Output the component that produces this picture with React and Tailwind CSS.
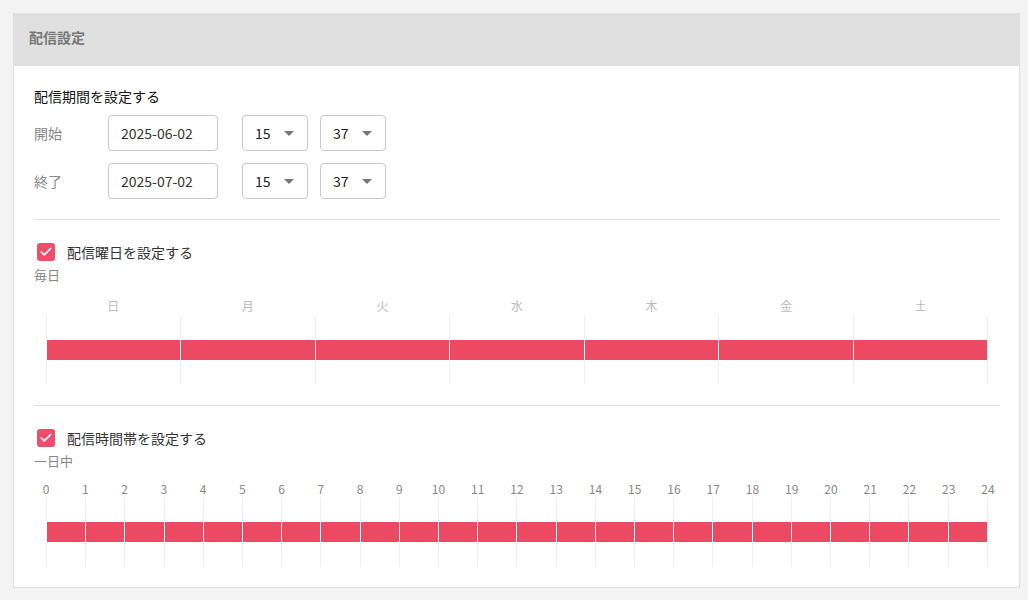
import { Check } from "lucide-react";

const days = ["日", "月", "火", "水", "木", "金", "土"];
const hours = Array.from({ length: 25 }, (_, i) => i);

const Arrow = () => (
  <svg width="10" height="5" viewBox="0 0 10 5" className="ml-auto">
    <path d="M0 0 L10 0 L5 5 Z" fill="#777" />
  </svg>
);

const Select = ({ value }) => (
  <div className="w-[66px] h-9 border border-[#c8c8c8] rounded flex items-center pl-3 pr-[13px] text-[14px] text-[#222]">
    <span>{value}</span>
    <Arrow />
  </div>
);

const DateRow = ({ label, date }) => (
  <div className="flex items-center">
    <span className="w-[74px] text-[14px] text-[#888]">{label}</span>
    <div className="w-[110px] h-9 border border-[#c8c8c8] rounded flex items-center px-3 text-[14px] text-[#333]">
      {date}
    </div>
    <div className="ml-6">
      <Select value="15" />
    </div>
    <div className="ml-3">
      <Select value="37" />
    </div>
  </div>
);

const CheckRow = ({ label }) => (
  <div className="flex items-center h-5">
    <div className="w-[18px] h-[18px] ml-[3px] rounded-[3px] bg-[#f04d6a] flex items-center justify-center">
      <Check size={14} strokeWidth={3} color="#fff" />
    </div>
    <span className="ml-3 text-[14px] text-[#333]">{label}</span>
  </div>
);

// one column of a chart: grid line on the left, bar in the middle
const Column = ({ last, bottom }) => (
  <div className={"flex-1 flex flex-col " + (last ? "border-r border-[#eee]" : "")}>
    <div className="h-[25px] border-l border-[#eee]" />
    <div className="h-5 bg-[#ec4962] border-l border-white" />
    <div className={bottom ? "h-[25px] border-l border-[#eee]" : "h-[24px] border-l border-[#eee]"} />
  </div>
);

export default function App() {
  return (
    <div
      className="min-h-[600px] bg-[#f3f3f3] pt-[13px] pl-[13px] pr-[8px] pb-[13px]"
      style={{ fontFamily: '"Noto Sans CJK JP", "Noto Sans", sans-serif' }}
    >
      <div className="bg-white border border-[#ddd] border-t-0">
        <div className="h-[53px] bg-[#e0e0e0] flex items-center px-[15px] pb-1 text-[14px] font-bold text-[#777]">
          配信設定
        </div>

        <div className="pl-5 pr-[19px] pt-5 pb-5">
          <div className="text-[14px] leading-5 text-[#111]">配信期間を設定する</div>
          <div className="mt-[9px] flex flex-col gap-3">
            <DateRow label="開始" date="2025-06-02" />
            <DateRow label="終了" date="2025-07-02" />
          </div>

          <div className="mt-5 border-t border-[#e0e0e0]" />

          <div className="mt-[22px]">
            <CheckRow label="配信曜日を設定する" />
          </div>
          <div className="mt-1 text-[13px] leading-[18px] text-[#888]">毎日</div>

          <div className="mx-3 mt-[13px]">
            <div className="flex h-[18px] items-center">
              {days.map((d) => (
                <div key={d} className="flex-1 text-center text-[12px] text-[#bbb]">
                  {d}
                </div>
              ))}
            </div>
            <div className="flex">
              {days.map((d, i) => (
                <Column key={d} last={i === days.length - 1} />
              ))}
            </div>
          </div>

          <div className="mt-[21px] border-t border-[#e0e0e0]" />

          <div className="mt-[22px]">
            <CheckRow label="配信時間帯を設定する" />
          </div>
          <div className="mt-1 text-[13px] leading-[18px] text-[#888]">一日中</div>

          <div className="mx-3 mt-[10px]">
            <div className="flex justify-between h-[17px] items-center -mx-[10px]">
              {hours.map((h) => (
                <div key={h} className="w-5 text-center text-[12px] text-[#888]">
                  {h}
                </div>
              ))}
            </div>
            <div className="flex">
              {hours.slice(0, 24).map((h) => (
                <Column key={h} last={h === 23} bottom />
              ))}
            </div>
          </div>
        </div>
      </div>
    </div>
  );
}
